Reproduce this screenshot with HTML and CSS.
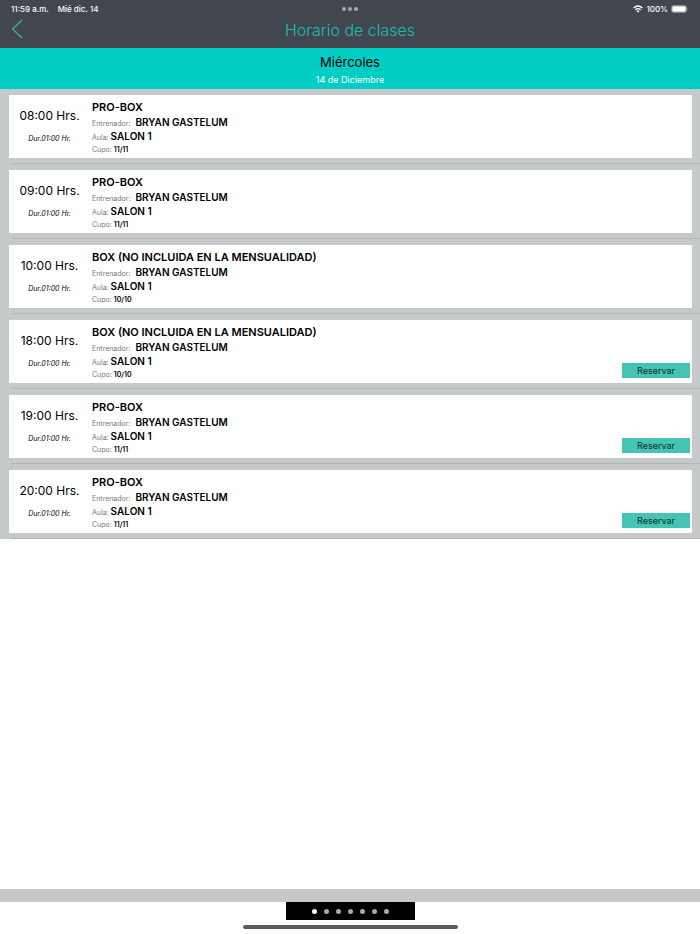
FILE: index.html
```
<!DOCTYPE html>
<html lang="es">
<head>
<meta charset="utf-8">
<meta name="viewport" content="width=device-width, initial-scale=1">
<title>Horario de clases</title>
<link rel="stylesheet" href="styles.css">
</head>
<body>
<header class="top">
  <div class="status">
    <div class="status-left"><span>11:59 a.m.</span><span>Mié dic. 14</span></div>
    <div class="more"><i></i><i></i><i></i></div>
    <div class="status-right">
      <svg class="wifi" viewBox="0 0 20 16" aria-hidden="true"><g fill="none" stroke="#fff" stroke-width="2.6"><path d="M1.2 6Q10-2 18.800 6"/><path d="M4.600 9.600Q10 4.800 15.400 9.600"/></g><path d="M6.900 11.800Q10 9 13.100 11.800L10 15.200Z" fill="#fff"/></svg>
      <span>100%</span>
      <svg class="battery" viewBox="0 0 36 16" aria-hidden="true"><rect x="1" y="1" width="30" height="14" rx="4" fill="none" stroke="#a0a3a8" stroke-width="1.500"/><rect x="2.500" y="2.500" width="27" height="11" rx="2.500" fill="#fff"/><path d="M33 5.500Q35.500 8 33 10.500Z" fill="#a0a3a8"/></svg>
    </div>
  </div>
  <div class="nav">
    <button class="back" type="button" aria-label="Atrás"><svg viewBox="0 0 12 20" aria-hidden="true"><path d="M11 1L1.500 10L11 19" fill="none" stroke="#3fb5a6" stroke-width="1.200"/></svg></button>
    <h1>Horario de clases</h1>
  </div>
</header>
<section class="day"><h2>Miércoles</h2><p>14 de Diciembre</p></section>
<main>
<ul class="classes">
  <li class="row"><article class="card">
    <div class="when"><time class="hour">08:00 Hrs.</time><span class="dur">Dur.01:00 Hr.</span></div>
    <div class="info"><h3>PRO-BOX</h3><p class="coach">Entrenador: <b>BRYAN GASTELUM</b></p><p class="room">Aula: <b>SALON 1</b></p><p class="quota">Cupo: <b>11/11</b></p></div>
  </article></li>
  <li class="row"><article class="card">
    <div class="when"><time class="hour">09:00 Hrs.</time><span class="dur">Dur.01:00 Hr.</span></div>
    <div class="info"><h3>PRO-BOX</h3><p class="coach">Entrenador: <b>BRYAN GASTELUM</b></p><p class="room">Aula: <b>SALON 1</b></p><p class="quota">Cupo: <b>11/11</b></p></div>
  </article></li>
  <li class="row"><article class="card">
    <div class="when"><time class="hour">10:00 Hrs.</time><span class="dur">Dur.01:00 Hr.</span></div>
    <div class="info"><h3>BOX (NO INCLUIDA EN LA MENSUALIDAD)</h3><p class="coach">Entrenador: <b>BRYAN GASTELUM</b></p><p class="room">Aula: <b>SALON 1</b></p><p class="quota">Cupo: <b>10/10</b></p></div>
  </article></li>
  <li class="row"><article class="card">
    <div class="when"><time class="hour">18:00 Hrs.</time><span class="dur">Dur.01:00 Hr.</span></div>
    <div class="info"><h3>BOX (NO INCLUIDA EN LA MENSUALIDAD)</h3><p class="coach">Entrenador: <b>BRYAN GASTELUM</b></p><p class="room">Aula: <b>SALON 1</b></p><p class="quota">Cupo: <b>10/10</b></p></div>
    <button class="reserve" type="button">Reservar</button>
  </article></li>
  <li class="row"><article class="card">
    <div class="when"><time class="hour">19:00 Hrs.</time><span class="dur">Dur.01:00 Hr.</span></div>
    <div class="info"><h3>PRO-BOX</h3><p class="coach">Entrenador: <b>BRYAN GASTELUM</b></p><p class="room">Aula: <b>SALON 1</b></p><p class="quota">Cupo: <b>11/11</b></p></div>
    <button class="reserve" type="button">Reservar</button>
  </article></li>
  <li class="row"><article class="card">
    <div class="when"><time class="hour">20:00 Hrs.</time><span class="dur">Dur.01:00 Hr.</span></div>
    <div class="info"><h3>PRO-BOX</h3><p class="coach">Entrenador: <b>BRYAN GASTELUM</b></p><p class="room">Aula: <b>SALON 1</b></p><p class="quota">Cupo: <b>11/11</b></p></div>
    <button class="reserve" type="button">Reservar</button>
  </article></li>
</ul>
</main>
<footer class="bottom">
  <div class="band"></div>
  <div class="pager"><i class="on"></i><i></i><i></i><i></i><i></i><i></i><i></i></div>
  <div class="home"></div>
</footer>
</body>
</html>
```
FILE: styles.css
```
* { box-sizing: border-box; }
body {
  margin: 0;
  min-height: 100vh;
  display: flex;
  flex-direction: column;
  background: #fff;
  color: #000;
  font-family: Inter, "Liberation Sans", sans-serif;
}
h1, h2, h3, p, ul { margin: 0; padding: 0; }
button { border: 0; padding: 0; font: inherit; cursor: pointer; }
svg { display: block; }

.top { background: #42464f; color: #fff; }
.status {
  display: grid;
  grid-template-columns: 1fr auto 1fr;
  align-items: center;
  height: 17px;
  padding: 0 11px;
  font-size: 8px;
  font-weight: 500;
}
.status-left { display: flex; gap: 9px; }
.status-right { display: flex; justify-content: flex-end; align-items: center; gap: 3px; }
.more { display: flex; gap: 2px; }
.more i { width: 4px; height: 4px; border-radius: 50%; background: #a7a9ad; }
.wifi { width: 10px; height: 8px; }
.battery { width: 18px; height: 8px; }
.nav {
  display: grid;
  grid-template-columns: 1fr auto 1fr;
  height: 31px;
  padding: 0 11px;
}
.back { justify-self: start; align-self: start; padding-top: 2px; background: none; }
.back svg { width: 12px; height: 20px; }
h1 { font-size: 16px; line-height: 26px; font-weight: 300; color: #17bfb1; }

.day {
  padding: 5px 0 0;
  background: #00cec4;
  text-align: center;
}
h2 { font-size: 13px; line-height: 18px; font-weight: 400; }
.day p { font-size: 9px; line-height: 18px; color: #fff; }

main { flex: 1; }
.classes { list-style: none; background: #c5c9ca; }
.row { position: relative; padding: 6px 8px 6px 9px; }
.row::after {
  content: "";
  position: absolute;
  left: 12px;
  right: 0;
  bottom: 0;
  height: 1px;
  background: #b3b7b8;
}
.card {
  display: flex;
  background: #fff;
  min-height: 63px;
}
.when {
  width: 83px;
  padding: 13px 2px 0 0;
  display: flex;
  flex-direction: column;
  align-items: center;
  gap: 8px;
}
.hour { font-size: 12px; line-height: 16px; }
.dur { font-size: 7px; line-height: 14px; font-style: italic; }
.info { flex: 1; padding-top: 4px; color: #777; }
h3 { margin-bottom: 2px; font-size: 11px; line-height: 16px; font-weight: 600; color: #000; }
.info p { font-size: 7px; line-height: 14px; white-space: nowrap; }
.info .quota { line-height: 10px; }
.info b { font-size: 10px; line-height: 10px; font-weight: 600; color: #000; }
.coach b { margin-left: 3px; }
.info .quota b { font-size: 7px; }
.reserve {
  align-self: flex-end;
  width: 68px;
  height: 15px;
  margin: 0 2px 5px 0;
  background: #43c4b5;
  color: #0c2b28;
  font-size: 9px;
  line-height: 15px;
}

.bottom { display: flex; flex-direction: column; align-items: center; padding-bottom: 5px; }
.band { align-self: stretch; height: 13px; background: #c5c9ca; }
.pager {
  display: flex;
  align-items: center;
  justify-content: center;
  gap: 7px;
  width: 129px;
  height: 18px;
  background: #000;
}
.pager i { width: 5px; height: 5px; border-radius: 50%; background: #aaa; }
.pager .on { background: #fff; }
.home { width: 215px; height: 4px; margin-top: 5px; border-radius: 2px; background: #5c5c5c; }
```
